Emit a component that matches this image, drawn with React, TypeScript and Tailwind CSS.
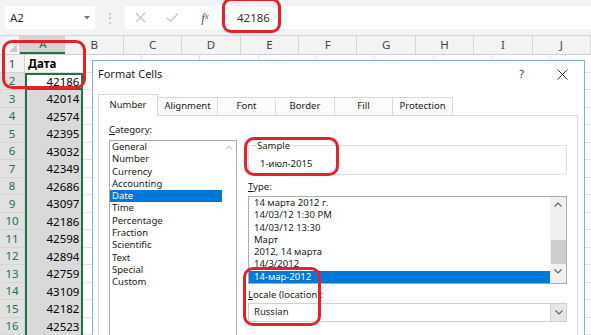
const cellRows = [
  "Дата", "42186", "42014", "42574", "42395", "43032", "42349", "42686",
  "43097", "42186", "42598", "42894", "42759", "43109", "42182", "42523",
];
const cols = ["B", "C", "D", "E", "F", "G", "H", "I", "J"];
const categories = [
  "General", "Number", "Currency", "Accounting", "Date", "Time",
  "Percentage", "Fraction", "Scientific", "Text", "Special", "Custom",
];
const types = [
  "14 марта 2012 г.", "14/03/12 1:30 PM", "14/03/12 13:30", "Март",
  "2012, 14 марта", "14/3/2012", "14-мар-2012",
];
const tabs = [
  { label: "Number", w: "w-[60px]" },
  { label: "Alignment", w: "w-[61px]" },
  { label: "Font", w: "w-[59px]" },
  { label: "Border", w: "w-[60px]" },
  { label: "Fill", w: "w-[59px]" },
  { label: "Protection", w: "w-[61px]" },
];

function Chevron({ up }: { up?: boolean }) {
  return (
    <svg width="8" height="5" viewBox="0 0 8 5" className="text-[#606060]">
      <path d={up ? "M0.5 4.5 L4 1 L7.5 4.5" : "M0.5 0.5 L4 4 L7.5 0.5"} fill="none" stroke="currentColor" strokeWidth="1.1" />
    </svg>
  );
}

function FormulaBar() {
  return (
    <div className="h-[36px] bg-[#f3f3f3] border-b border-[#d6d6d6] flex items-center pl-[5px]">
      <div className="w-[90px] h-[23px] bg-white flex items-center justify-between px-[5px] text-[11.5px] text-[#333]">
        <span>A2</span>
        <svg width="6" height="4" viewBox="0 0 6 4"><path d="M0 0 L6 0 L3 3.5Z" fill="#777" /></svg>
      </div>
      <div className="w-[30px] flex justify-center text-[#b8b8b8] text-[12px] leading-none">⋮</div>
      <div className="flex-1 h-[23px] bg-white flex items-center">
        <div className="w-[30px] flex justify-center">
          <svg width="11" height="11" viewBox="0 0 11 11"><path d="M1 1 L10 10 M10 1 L1 10" stroke="#c4c4c4" strokeWidth="1.2" /></svg>
        </div>
        <div className="w-[34px] flex justify-center">
          <svg width="13" height="11" viewBox="0 0 13 11"><path d="M1 6 L4.5 9.5 L12 1.5" fill="none" stroke="#c4c4c4" strokeWidth="1.2" /></svg>
        </div>
        <div className="w-[32px] flex justify-center font-['Liberation_Serif',serif] italic text-[13px] text-[#555]">
          f<span className="text-[9px] translate-y-[2px]">x</span>
        </div>
        <span className="ml-[16px] text-[11.5px] text-[#333]">42186</span>
      </div>
    </div>
  );
}

function Grid() {
  return (
    <div className="flex flex-col">
      <div className="h-[19px] flex bg-[#f3f3f3] border-b border-[#d0d0d0] text-[11.5px] text-[#444]">
        <div className="w-[25px] border-r border-[#d0d0d0] flex items-end justify-end p-[2px]">
          <svg width="8" height="8" viewBox="0 0 8 8"><path d="M8 0 L8 8 L0 8Z" fill="#c8c8c8" /></svg>
        </div>
        <div className="w-[58.4px] bg-[#d3d3d3] border-b-2 border-[#217346] text-[#217346] flex items-center justify-center">A</div>
        {cols.map((c) => (
          <div key={c} className="w-[58.4px] shrink-0 border-r border-[#d4d4d4] flex items-center justify-center">{c}</div>
        ))}
      </div>
      {cellRows.map((v, i) => {
        const sel = i > 0;
        return (
          <div key={i} className="h-[17.5px] flex text-[11.5px]">
            <div className={`w-[25px] shrink-0 border-b border-r border-[#d4d4d4] flex items-center justify-center ${sel ? "bg-[#e1e1e1] text-[#217346]" : "bg-[#f3f3f3] text-[#444]"}`}>
              {i + 1}
            </div>
            {i === 0 ? (
              <div className="w-[58.4px] shrink-0 bg-white border-b border-[#e1e1e1] font-bold text-black flex items-center pl-[3px]">{v}</div>
            ) : i === 1 ? (
              <div className="w-[58.4px] shrink-0 bg-white border-2 border-[#217346] text-black flex items-center justify-end pr-[2px]">{v}</div>
            ) : (
              <div className="w-[58.4px] shrink-0 bg-[#d9d9d9] border-x-2 border-[#217346] text-black flex items-center justify-end pr-[2px]">{v}</div>
            )}
            {cols.map((c) => (
              <div key={c} className="w-[58.4px] shrink-0 bg-white border-r border-b border-[#e1e1e1]" />
            ))}
          </div>
        );
      })}
    </div>
  );
}

function Dialog() {
  return (
    <div className="absolute left-[92px] top-[60px] w-[493px] h-[290px] bg-white border border-[#7ab0e0] font-['Noto_Sans',sans-serif] text-[9.5px] text-[#1a1a1a]">
      <div className="h-[27px] flex items-center pl-[5px] pr-[16px]">
        <span className="text-[11px] text-[#222]">Format Cells</span>
        <span className="ml-auto text-[11px] text-[#333]">?</span>
        <svg className="ml-[33px]" width="11" height="11" viewBox="0 0 11 11"><path d="M0.5 0.5 L10.5 10.5 M10.5 0.5 L0.5 10.5" stroke="#333" strokeWidth="1" /></svg>
      </div>
      <div className="ml-[5px] mt-[7px] h-[20px] flex items-end">
        {tabs.map((t, i) => (
          <div
            key={t.label}
            className={`${t.w} shrink-0 flex items-center justify-center border border-[#d9d9d9] ${i === 0 ? "h-[22px] bg-white border-b-white -mb-px relative z-10" : "h-[18px] bg-[#fbfbfb] border-b-0 -ml-px"}`}
          >
            {t.label}
          </div>
        ))}
      </div>
      <div className="ml-[5px] mr-[6px] h-[230px] border border-[#d9d9d9] flex pl-[10px] pr-[10px]">
        <div className="w-[128px] shrink-0 pt-[8px]">
          <div className="h-[12px] leading-[12px]"><span className="underline">C</span>ategory:</div>
          <div className="mt-[4px] h-[200px] border border-[#adadad] flex">
            <div className="flex-1 flex flex-col">
              {categories.map((c, i) => (
                <div key={c} className={`h-[12.3px] leading-[12.3px] pl-[2px] ${i === 4 ? "bg-[#0078d7] text-white" : ""}`}>{c}</div>
              ))}
            </div>
            <div className="w-[14px] flex justify-center pt-[4px] opacity-30"><Chevron up /></div>
          </div>
        </div>
        <div className="ml-[11px] flex-1 pt-[29px] flex flex-col">
          <div className="relative h-[30px] border border-[#dcdcdc] rounded-[2px]">
            <span className="absolute -top-[6px] left-[7px] bg-white px-[1px] leading-[12px]">Sample</span>
            <span className="absolute top-[12px] left-[11px] leading-[12px]">1-июл-2015</span>
          </div>
          <div className="mt-[6px] h-[12px] leading-[12px]"><span className="underline">T</span>ype:</div>
          <div className="mt-[3px] h-[88px] border border-[#adadad] flex">
            <div className="flex-1 flex flex-col">
              {types.map((t, i) => (
                <div key={t} className={`h-[12.3px] leading-[12.3px] pl-[5px] ${i === 6 ? "bg-[#0078d7] text-white" : ""}`}>{t}</div>
              ))}
            </div>
            <div className="w-[16px] bg-[#f0f0f0] flex flex-col items-center pt-[5px]">
              <Chevron up />
              <div className="mt-[33px] w-[15px] h-[24px] bg-[#cdcdcd]" />
              <div className="mt-[5px]"><Chevron /></div>
            </div>
          </div>
          <div className="mt-[5px] h-[12px] leading-[12px]"><span className="underline">L</span>ocale (location):</div>
          <div className="mt-[2px] h-[19px] border border-[#cfcfcf] flex items-center">
            <span className="pl-[5px]">Russian</span>
            <div className="ml-auto w-[16px] h-full bg-[#e6e6e6] border-l border-[#cfcfcf] flex items-center justify-center"><Chevron /></div>
          </div>
        </div>
      </div>
    </div>
  );
}

export default function App() {
  return (
    <div className="relative w-[591px] h-[335px] overflow-hidden bg-white font-['Noto_Sans',sans-serif]">
      <FormulaBar />
      <Grid />
      <Dialog />
      <div className="absolute left-[222px] -top-[2px] w-[59px] h-[35px] border-[3px] border-[#e2232b] rounded-[9px]" />
      <div className="absolute left-[2px] top-[40px] w-[84px] h-[49px] border-[3px] border-[#e2232b] rounded-[10px]" />
      <div className="absolute left-[244px] top-[137px] w-[95px] h-[39px] border-[3px] border-[#e2232b] rounded-[10px]" />
      <div className="absolute left-[243px] top-[267px] w-[78px] h-[59px] border-[3px] border-[#e2232b] rounded-[10px]" />
    </div>
  );
}
